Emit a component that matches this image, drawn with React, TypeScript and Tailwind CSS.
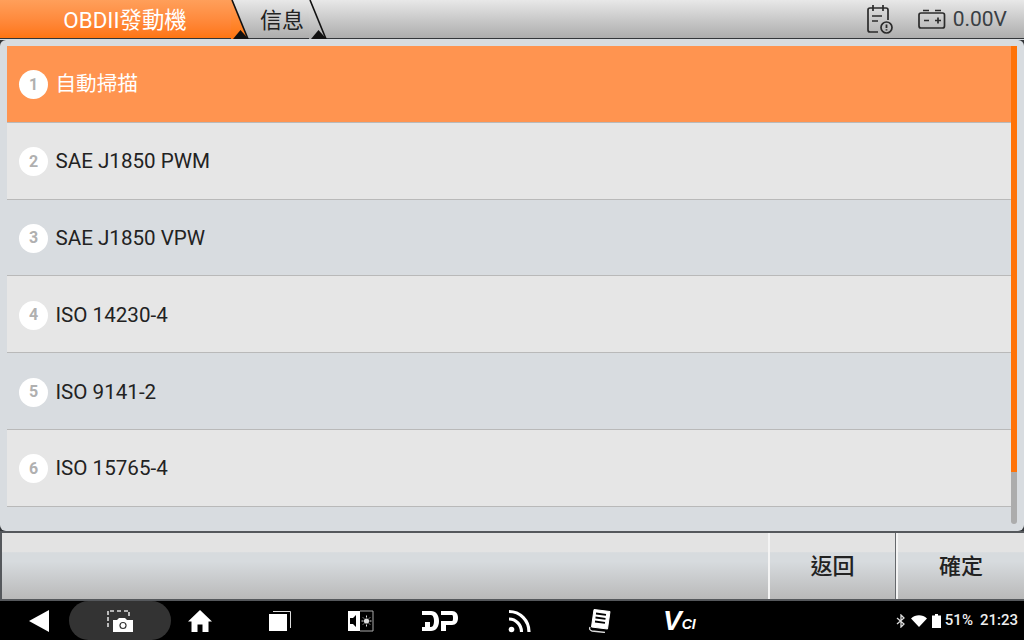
const rows = ['自動掃描', 'SAE J1850 PWM', 'SAE J1850 VPW', 'ISO 14230-4', 'ISO 9141-2', 'ISO 15765-4']

function TabEdge({ from, to }: { from: string; to: string }) {
  const id = `edge-${from.slice(1)}`
  return (
    <svg width="18" height="39" viewBox="0 0 18 39" className="shrink-0">
      <defs>
        <linearGradient id={id} x1="0" y1="0" x2="0" y2="1">
          <stop offset="0" stopColor={from} />
          <stop offset="1" stopColor={to} />
        </linearGradient>
      </defs>
      <path d="M0 0H1L16.5 39H0Z" fill={`url(#${id})`} />
      <path d="M1 0L17 39" stroke="#111" strokeWidth="1.6" fill="none" />
      <path d="M2 39L9.5 30L17.5 39Z" fill="#111" />
    </svg>
  )
}

function TopBar() {
  return (
    <div className="h-[39px] shrink-0 flex bg-gradient-to-b from-[#e8e8e8] to-[#adadad] border-b border-[#33363a]">
      <div className="w-[231px] h-[38px] flex items-center justify-center pl-[19px] pt-[3px] text-[22.4px] text-white bg-gradient-to-b from-[#ff9f5a] to-[#ff7510]">
        OBDII發動機
      </div>
      <TabEdge from="#ff9f5a" to="#ff7510" />
      <div className="w-[60px] h-[38px] flex items-center justify-center pl-[6px] pt-[3px] text-[22px] text-[#222] bg-gradient-to-b from-[#e8e8e8] to-[#adadad]">
        信息
      </div>
      <TabEdge from="#e8e8e8" to="#adadad" />
      <div className="flex-1 flex items-center justify-end pr-[17px] h-[38px]">
        <svg width="28" height="30" viewBox="0 0 28 30" fill="none" stroke="#2b2b2b" strokeWidth="1.7" className="mr-[24px]">
          <path d="M12 28H4a2 2 0 0 1-2-2V6a2 2 0 0 1 2-2h16a2 2 0 0 1 2 2v10" />
          <path d="M7 1v6M17 1v6M6 12h10M6 17h6" />
          <circle cx="20.5" cy="23.5" r="5.5" />
          <path d="M20.5 20.5v3.5M20.5 25.2v1.3" strokeWidth="1.8" />
        </svg>
        <svg width="28" height="20" viewBox="0 0 28 20" fill="none" stroke="#2b2b2b" strokeWidth="1.7" className="mr-[7px]">
          <rect x="1" y="4" width="25.5" height="15" rx="2" />
          <path d="M5 1.5h6M17 1.5h6M6 11.5h5M17 11.5h6M20 8.5v6" />
        </svg>
        <span className="text-[21px] pt-[2px] text-[#3a3f44]">0.00V</span>
      </div>
    </div>
  )
}

function ListRow({ label, index }: { label: string; index: number }) {
  const active = index === 0
  const rowBg = active ? 'bg-[#ff9450]' : index % 2 === 1 ? 'bg-[#e6e6e6]' : 'bg-[#d8dce0]'
  return (
    <div className={`h-[76.8px] shrink-0 flex items-center pl-[12px] pt-[2px] border-b border-[#b9b9b9] ${rowBg}`}>
      <div className="w-[29px] h-[29px] rounded-full bg-white flex items-center justify-center text-[16px] font-bold text-[#b0b0b0]">
        {index + 1}
      </div>
      <span className={`ml-[7.5px] text-[20.6px] ${active ? 'text-white' : 'text-[#222]'}`}>{label}</span>
    </div>
  )
}

function ListPanel() {
  return (
    <div className="h-[491px] shrink-0 bg-[#d8dce0] rounded-[6px] pt-[6px] pl-[7px] pr-[7px] flex overflow-hidden">
      <div className="flex-1 h-[478px] flex flex-col overflow-hidden">
        {rows.map((label, i) => (
          <ListRow key={label} label={label} index={i} />
        ))}
      </div>
      <div className="w-[6px] h-[478px] rounded-b-[3px] bg-[#acacac] overflow-hidden">
        <div className="h-[426px] bg-[#ff7308]" />
      </div>
    </div>
  )
}

function BottomBar() {
  const barBg = 'bg-[linear-gradient(#e3e3e3_0%,#e3e3e3_28%,#d7dbde_30%,#d7dbde_43%,#b9b9b9_100%)]'
  return (
    <div className={`h-[70px] shrink-0 flex border-y-2 border-l-2 border-[#55585c] ${barBg}`}>
      <div className="flex-1" />
      <button className="w-[127px] border-l-2 border-l-[#f4f4f4] text-[22px] font-medium text-[#222]">返回</button>
      <div className="w-[1px] bg-[#66696d]" />
      <button className="w-[128px] border-l-2 border-l-[#f4f4f4] text-[22px] font-medium text-[#222]">確定</button>
    </div>
  )
}

function NavBar() {
  return (
    <div className="flex-1 bg-black flex items-center">
      <svg width="22" height="24" viewBox="0 0 22 24" className="ml-[28px]">
        <path d="M21 1v22L1 12Z" fill="#fff" />
      </svg>
      <div className="ml-[19px] w-[102px] h-[39px] rounded-full bg-[#333] flex items-center justify-center">
        <svg width="28" height="24" viewBox="0 0 28 24" fill="none">
          <path d="M8 2H2v16M11 2h4M18 2h5v5" stroke="#ddd" strokeWidth="1.6" strokeDasharray="4 2" />
          <path d="M7 11h4l2-2h6l2 2h6v12H7Z" fill="#fff" />
          <circle cx="17" cy="16.5" r="3.6" fill="#333" />
          <circle cx="17" cy="16.5" r="2.4" fill="#fff" />
        </svg>
      </div>
      <svg width="26" height="24" viewBox="0 0 26 24" className="ml-[16px]">
        <path d="M13 1L25 12.5H21.5V23H15.5V15.5H10.5V23H4.5V12.5H1Z" fill="#fff" />
      </svg>
      <svg width="24" height="22" viewBox="0 0 24 22" fill="none" className="ml-[55px]">
        <path d="M1 4h18v17H1Z" fill="#fff" />
        <path d="M5 1.5h17.5V18" stroke="#ddd" strokeWidth="1" />
      </svg>
      <svg width="27" height="22" viewBox="0 0 27 22" className="ml-[55px]">
        <path d="M1 1h12v20H1Z" fill="#fff" />
        <path d="M13 1h13v20H13" fill="none" stroke="#aaa" />
        <path d="M3 8h3l3-3v12l-3-3H3Z" fill="#000" />
        <circle cx="19.5" cy="11" r="2.6" fill="#ddd" />
        <path d="M19.5 5.5v2M19.5 14.5v2M14.5 11h2M22.5 11h2M16 7.5l1 1M23 7.5l-1 1M16 14.5l1-1M23 14.5l-1-1" stroke="#ddd" />
      </svg>
      <svg width="38" height="22" viewBox="0 0 38 22" className="ml-[47px]">
        <path d="M1 1h9c5 0 8 4 8 10s-3 10-8 10H1v-4h3V12h5v5h1c2 0 3-3 3-6s-1-6-3-6H1Z" fill="#fff" />
        <path d="M20 1h11c4 0 6 3 6 7s-2 7-6 7h-6v6h-5v-10h11c1 0 1-2 1-3s0-3-1-3H20Z" fill="#fff" />
      </svg>
      <svg width="24" height="24" viewBox="0 0 24 24" fill="none" stroke="#fff" strokeWidth="3.2" className="ml-[49px]">
        <path d="M1 2.5c11 0 20 9 20 20.5" />
        <path d="M1 10c7 0 12.5 6 12.5 13" />
        <circle cx="3.5" cy="20.5" r="2.8" fill="#fff" stroke="none" />
      </svg>
      <svg width="24" height="24" viewBox="0 0 24 24" className="ml-[55px]">
        <path d="M7 0.5l16 2-2.5 17.5-16-2Z" fill="#fff" stroke="#fff" strokeLinejoin="round" />
        <path d="M9 4.5l10 1.3M8.5 8.5l10 1.3M8 12.5l10 1.3" stroke="#000" strokeWidth="1.8" />
        <path d="M3 18c-1 2 0 3.5 2 4l13 1.5" stroke="#ddd" strokeWidth="1.3" fill="none" />
      </svg>
      <div className="ml-[52px] flex items-end h-[24px] font-['Liberation_Sans',sans-serif] italic font-bold text-white">
        <span className="text-[28px] leading-[24px]">V</span>
        <span className="text-[14px] leading-[18px]">CI</span>
      </div>
      <div className="flex-1" />
      <div className="flex items-center pr-[6px] text-[15px] font-medium text-[#eee]">
        <svg width="10" height="14" viewBox="0 0 10 14" fill="none" stroke="#ddd" strokeWidth="1.3" className="mr-[1px]">
          <path d="M1 4l7 6-3 3V1l3 3-7 6" />
        </svg>
        <svg width="16" height="12" viewBox="0 0 16 12" className="ml-[4px]">
          <path d="M0 3.5C4.5-.7 11.5-.7 16 3.5L8 12Z" fill="#fff" />
        </svg>
        <svg width="9" height="14" viewBox="0 0 9 14" className="ml-[5px]">
          <path d="M3 0h3v1.5h3V14H0V1.5h3Z" fill="#fff" />
        </svg>
        <span className="ml-[4px]">51%</span>
        <span className="ml-[7px]">21:23</span>
      </div>
    </div>
  )
}

export default function App() {
  return (
    <div className="w-[1024px] h-[640px] flex flex-col overflow-hidden bg-[#33363a] font-['Roboto','Noto_Sans_CJK_TC',sans-serif]">
      <TopBar />
      <div className="h-[1px] shrink-0 bg-[#d8dce0]" />
      <ListPanel />
      <BottomBar />
      <NavBar />
    </div>
  )
}
